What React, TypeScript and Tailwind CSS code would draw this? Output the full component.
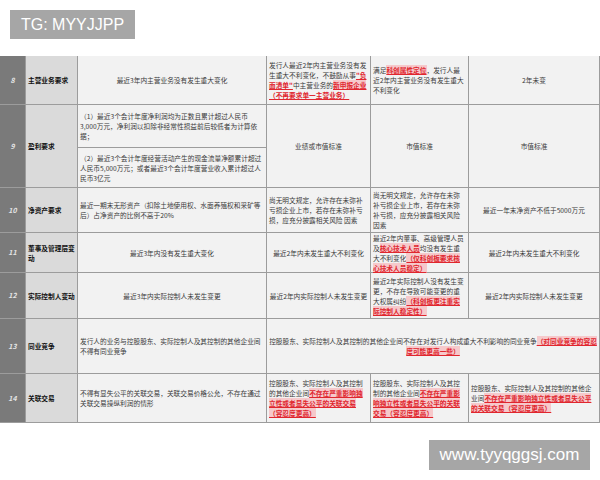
import React from 'react'

const font = { fontFamily: '"Noto Sans CJK SC", "Noto Sans", sans-serif' }

function Red({ children, hl = false }: { children: React.ReactNode; hl?: boolean }) {
  return (
    <span className={`text-[#e0262e] font-bold underline underline-offset-1 ${hl ? 'bg-[#f6c9cb]' : ''}`}>
      {children}
    </span>
  )
}

function Num({ n }: { n: number }) {
  return (
    <div className="bg-[#7a7a7a] flex items-center justify-center text-[7px] italic font-bold text-[#e4e4e4]">
      {n}
    </div>
  )
}

function Topic({ children }: { children: React.ReactNode }) {
  return (
    <div className="bg-[#dadada] flex items-center px-[2px] text-[6.7px] leading-[10px] font-bold text-[#111]">
      {children}
    </div>
  )
}

function Cell({
  children,
  center = false,
  className = '',
}: {
  children?: React.ReactNode
  center?: boolean
  className?: string
}) {
  return (
    <div
      className={`bg-[#f2f2f2] flex items-center px-[2px] text-[6.7px] leading-[10px] text-[#3a3a3a] ${
        center ? 'justify-center text-center' : ''
      } ${className}`}
    >
      <div>{children}</div>
    </div>
  )
}

export default function App() {
  const jiaoyi = (
    <>
      控股股东、实际控制人及其控制的其他企业间
      <Red hl>不存在严重影响独立性或者显失公平的关联交易（容忍度更高）</Red>
    </>
  )

  return (
    <div className="w-[600px] h-[480px] bg-white overflow-hidden" style={font}>
      <div className="pt-[10px] pl-[10px]">
        <div
          className="w-[125px] h-[29px] bg-[#a6a6a6] text-white text-[16px] flex items-center justify-center"
          style={{ fontFamily: '"Liberation Sans", Arial, sans-serif' }}
        >
          TG: MYYJJPP
        </div>
      </div>

      <div className="mt-[17px] w-[600px] border-r border-b border-[#9c9c9c] bg-[#9c9c9c] grid gap-px grid-cols-[25px_51px_188px_103px_97px_130px] grid-rows-[48px_82px_44px_39px_45px_54px_48px]">
        {/* 8 */}
        <Num n={8} />
        <Topic>主营业务要求</Topic>
        <Cell center>最近3年内主营业务没有发生重大变化</Cell>
        <Cell>
          发行人最近2年内主营业务没有发生重大不利变化，不鼓励从事
          <Red>"负面清单"</Red>中主营业务的<Red hl>新申报企业</Red>
          <Red>（不再要求单一主营业务）</Red>
        </Cell>
        <Cell>
          满足<Red hl>科创属性定位</Red>，发行人最近2年内主营业务没有发生重大不利变化
        </Cell>
        <Cell center>2年未变</Cell>

        {/* 9 */}
        <Num n={9} />
        <Topic>盈利要求</Topic>
        <div className="flex flex-col gap-px bg-[#9c9c9c]">
          <Cell className="h-[42px]">
            （1）最近3个会计年度净利润均为正数且累计超过人民币3,000万元，净利润以扣除非经常性损益前后较低者为计算依据；
          </Cell>
          <Cell className="flex-1">
            （2）最近3个会计年度经营活动产生的现金流量净额累计超过人民币5,000万元；或者最近3个会计年度营业收入累计超过人民币3亿元
          </Cell>
        </div>
        <Cell center>业绩或市值标准</Cell>
        <Cell center>市值标准</Cell>
        <Cell center>市值标准</Cell>

        {/* 10 */}
        <Num n={10} />
        <Topic>净资产要求</Topic>
        <Cell>最近一期末无形资产（扣除土地使用权、水面养殖权和采矿等后）占净资产的比例不高于20%</Cell>
        <Cell>尚无明文规定，允许存在未弥补亏损企业上市，若存在未弥补亏损，应充分披露相关风险 因素</Cell>
        <Cell>尚无明文规定，允许存在未弥补亏损企业上市，若存在未弥补亏损，应充分披露相关风险 因素</Cell>
        <Cell center>最近一年末净资产不低于5000万元</Cell>

        {/* 11 */}
        <Num n={11} />
        <Topic>董事及管理层变动</Topic>
        <Cell center>最近3年内没有发生重大变化</Cell>
        <Cell center>最近2年内未发生重大不利变化</Cell>
        <Cell>
          最近2年内董事、高级管理人员及<Red hl>核心技术人员</Red>均没有发生重大不利变化
          <Red hl>（仅科创板要求核心技术人员稳定）</Red>
        </Cell>
        <Cell center>最近2年内未发生重大不利变化</Cell>

        {/* 12 */}
        <Num n={12} />
        <Topic>实际控制人变动</Topic>
        <Cell center>最近3年内实际控制人未发生变更</Cell>
        <Cell center>最近2年内实际控制人未发生变更</Cell>
        <Cell>
          最近2年实际控制人没有发生变更，不存在导致可能变更的重大权属纠纷
          <Red hl>（科创板更注重实际控制人稳定性）</Red>
        </Cell>
        <Cell center>最近2年内实际控制人未发生变更</Cell>

        {/* 13 */}
        <Num n={13} />
        <Topic>同业竞争</Topic>
        <Cell>发行人的业务与控股股东、实际控制人及其控制的其他企业间不得有同业竞争</Cell>
        <Cell center className="col-span-3">
          控股股东、实际控制人及其控制的其他企业间不存在对发行人构成重大不利影响的同业竞争
          <Red hl>（对同业竞争的容忍度可能更高一些）</Red>
        </Cell>

        {/* 14 */}
        <Num n={14} />
        <Topic>关联交易</Topic>
        <Cell>不得有显失公平的关联交易，关联交易价格公允，不存在通过关联交易操纵利润的情形</Cell>
        <Cell>{jiaoyi}</Cell>
        <Cell>{jiaoyi}</Cell>
        <Cell>{jiaoyi}</Cell>
      </div>

      <div className="mt-[17px] flex justify-end pr-[10px]">
        <div
          className="w-[161px] h-[30px] bg-[#a6a6a6] text-white text-[17px] flex items-center justify-center"
          style={{ fontFamily: '"Liberation Sans", Arial, sans-serif' }}
        >
          www.tyyqggsj.com
        </div>
      </div>
    </div>
  )
}
